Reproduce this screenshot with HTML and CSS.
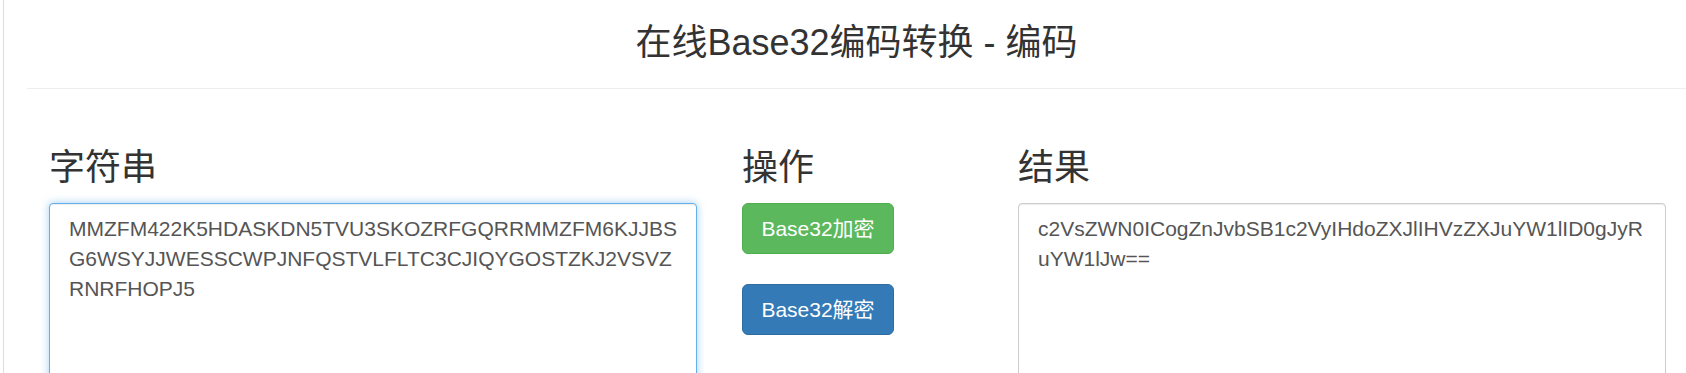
FILE: index.html
```html
<!DOCTYPE html>
<html lang="zh-CN">
<head>
  <meta charset="UTF-8" />
  <meta name="viewport" content="width=device-width, initial-scale=1.0" />
  <title>在线Base32编码转换 - 编码</title>
  <link rel="stylesheet" href="styles.css">
</head>
<body>
  <div class="page">
    <div class="page-header">
      <h1>在线Base32编码转换 - 编码</h1>
    </div>

    <div class="tool">
      <div class="col col-text">
        <h2>字符串</h2>
        <textarea class="form-control is-focus" id="source">MMZFM422K5HDASKDN5TVU3SKOZRFGQRRMMZFM6KJJBSG6WSYJJWESSCWPJNFQSTVLFLTC3CJIQYGOSTZKJ2VSVZRNRFHOPJ5</textarea>
      </div>

      <div class="col col-ops">
        <h2>操作</h2>
        <button class="btn btn-success">Base32加密</button>
        <button class="btn btn-primary">Base32解密</button>
      </div>

      <div class="col col-text">
        <h2>结果</h2>
        <textarea class="form-control" id="result">c2VsZWN0ICogZnJvbSB1c2VyIHdoZXJlIHVzZXJuYW1lID0gJyRuYW1lJw==</textarea>
      </div>
    </div>
  </div>
</body>
</html>
```

FILE: styles.css
```css
* {
  box-sizing: border-box;
}

html,
body {
  height: 100%;
}

body {
  margin: 0;
  padding: 0;
  background: #fff;
  color: #333;
  font-family: "Liberation Sans", "Noto Sans CJK SC", sans-serif;
  overflow: hidden;
}

.page {
  min-height: 100%;
  margin-left: 3px;
  border-left: 1px solid #ddd;
}

.page-header {
  margin-left: 23px;
  padding: 23px 0 25px;
  border-bottom: 1px solid #eee;
}

.page-header h1 {
  margin: 0;
  font-size: 36px;
  font-weight: normal;
  line-height: 40px;
  text-align: center;
}

.tool {
  display: flex;
  gap: 0;
  padding: 59px 0 0 45px;
}

.col h2 {
  margin: 0 0 15px;
  font-size: 36px;
  font-weight: normal;
  line-height: 40px;
}

.col-text {
  width: 648px;
}

.col-ops {
  width: 152px;
  margin: 0 124px 0 45px;
  display: flex;
  flex-direction: column;
  gap: 30px;
}

.col-ops h2 {
  margin-bottom: -15px;
}

.form-control {
  display: block;
  width: 100%;
  height: 300px;
  padding: 10px 15px 10px 19px;
  font-family: inherit;
  font-size: 21px;
  line-height: 30px;
  color: #555;
  background: #fff;
  border: 1px solid #ccc;
  border-radius: 4px;
  box-shadow: inset 0 1px 1px rgba(0, 0, 0, 0.075);
  resize: vertical;
  outline: none;
}

.form-control.is-focus,
.form-control:focus {
  border-color: #66afe9;
  box-shadow: inset 0 1px 1px rgba(0, 0, 0, 0.075), 0 0 8px rgba(102, 175, 233, 0.6);
}

.btn {
  width: 152px;
  padding: 10px 0;
  font-family: inherit;
  font-size: 21px;
  line-height: 29px;
  color: #fff;
  border: 1px solid transparent;
  border-radius: 6px;
  cursor: pointer;
}

.btn-success {
  background: #5cb85c;
  border-color: #4cae4c;
}

.btn-primary {
  background: #337ab7;
  border-color: #2e6da4;
}
```
